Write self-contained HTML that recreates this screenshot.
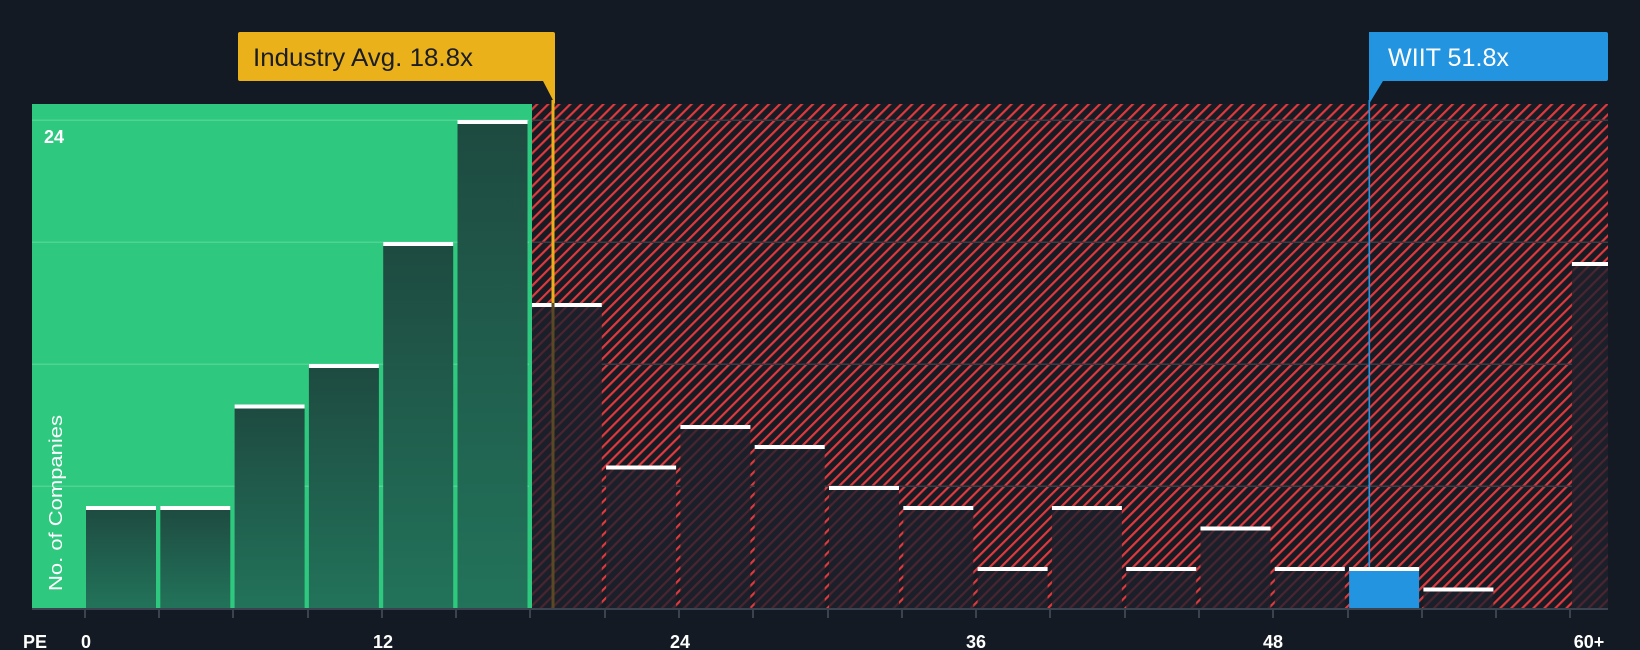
<!DOCTYPE html>
<html><head><meta charset="utf-8"><style>
html,body{margin:0;padding:0;background:#131a24;}
svg{display:block}
text{font-family:"Liberation Sans",sans-serif;}
</style></head><body>
<svg width="1640" height="650" viewBox="0 0 1640 650" xmlns="http://www.w3.org/2000/svg">
<defs>
<pattern id="hatch" patternUnits="userSpaceOnUse" width="7.8" height="7.8" patternTransform="rotate(45)">
<rect width="7.8" height="7.8" fill="#171b23"/>
<rect x="0" y="0" width="2.2" height="7.8" fill="#e0393e"/>
</pattern>
<pattern id="hatch2" patternUnits="userSpaceOnUse" width="7.8" height="7.8" patternTransform="rotate(45)">
<rect width="7.8" height="7.8" fill="#1b1f29"/>
<rect x="0" y="0" width="2.2" height="7.8" fill="#4a2530"/>
</pattern>
<linearGradient id="gbar" x1="0" y1="0" x2="0" y2="1">
<stop offset="0" stop-color="#1e4a40"/><stop offset="1" stop-color="#22735a"/>
</linearGradient>
</defs>
<rect width="1640" height="650" fill="#131a24"/>
<rect x="32" y="104" width="499" height="504" fill="#2ec97f"/>
<rect x="531" y="104" width="1077" height="504" fill="url(#hatch)"/>
<g stroke-width="1.5">
<line x1="32" x2="531" y1="120.3" y2="120.3" stroke="#4fd494"/>
<line x1="32" x2="531" y1="242.3" y2="242.3" stroke="#4fd494"/>
<line x1="32" x2="531" y1="364.3" y2="364.3" stroke="#4fd494"/>
<line x1="32" x2="531" y1="486.3" y2="486.3" stroke="#4fd494"/>
<line x1="531" x2="1608" y1="120.3" y2="120.3" stroke="#3a3d45"/>
<line x1="531" x2="1608" y1="242.3" y2="242.3" stroke="#3a3d45"/>
<line x1="531" x2="1608" y1="364.3" y2="364.3" stroke="#3a3d45"/>
<line x1="531" x2="1608" y1="486.3" y2="486.3" stroke="#3a3d45"/>
</g>
<g fill="url(#gbar)">
<rect x="86" y="506.4" width="70" height="101.6"/>
<rect x="160.3" y="506.4" width="70" height="101.6"/>
<rect x="234.6" y="404.7" width="70" height="203.3"/>
<rect x="308.9" y="364" width="70" height="244"/>
<rect x="383.2" y="242" width="70" height="366"/>
<rect x="457.5" y="120" width="70" height="488"/>
</g>
<g fill="url(#hatch2)">
<rect x="531.8" y="303" width="70" height="305"/>
<rect x="606.1" y="465.7" width="70" height="142.3"/>
<rect x="680.4" y="425" width="70" height="183"/>
<rect x="754.7" y="445.4" width="70" height="162.6"/>
<rect x="829" y="486" width="70" height="122"/>
<rect x="903.3" y="506.4" width="70" height="101.6"/>
<rect x="977.6" y="567.3" width="70" height="40.7"/>
<rect x="1051.9" y="506.4" width="70" height="101.6"/>
<rect x="1126.2" y="567.3" width="70" height="40.7"/>
<rect x="1200.5" y="526.7" width="70" height="81.3"/>
<rect x="1274.8" y="567.3" width="70" height="40.7"/>
<rect x="1423.4" y="587.7" width="70" height="20.3"/>
<rect x="1571.9" y="262.4" width="36.1" height="345.6"/>
</g>
<rect x="1349.1" y="567.3" width="70" height="40.7" fill="#2394e0"/>
<g fill="#ffffff">
<rect x="86" y="506" width="70" height="4"/>
<rect x="160.3" y="506" width="70" height="4"/>
<rect x="234.6" y="404.5" width="70" height="4"/>
<rect x="308.9" y="364" width="70" height="4"/>
<rect x="383.2" y="242" width="70" height="4"/>
<rect x="457.5" y="120" width="70" height="4"/>
<rect x="531.8" y="303" width="70" height="4"/>
<rect x="606.1" y="465.5" width="70" height="4"/>
<rect x="680.4" y="425" width="70" height="4"/>
<rect x="754.7" y="445" width="70" height="4"/>
<rect x="829" y="486" width="70" height="4"/>
<rect x="903.3" y="506" width="70" height="4"/>
<rect x="977.6" y="567" width="70" height="4"/>
<rect x="1051.9" y="506" width="70" height="4"/>
<rect x="1126.2" y="567" width="70" height="4"/>
<rect x="1200.5" y="526.5" width="70" height="4"/>
<rect x="1274.8" y="567" width="70" height="4"/>
<rect x="1349.1" y="567" width="70" height="4"/>
<rect x="1423.4" y="587.5" width="70" height="4"/>
<rect x="1571.9" y="262" width="36.1" height="4"/>
</g>
<rect x="529" y="104" width="3" height="504" fill="#2ec97f"/>
<rect x="551.5" y="100" width="3" height="204" fill="#eab11a"/>
<rect x="551.5" y="303" width="3" height="305" fill="#5a4a24"/>
<rect x="1368.5" y="100" width="1.6" height="467" fill="#2394e0"/>
<line x1="32" x2="1608" y1="609" y2="609" stroke="#3c4350" stroke-width="2"/>
<g stroke="#3c4350" stroke-width="2">
<line x1="85" x2="85" y1="609" y2="618"/><line x1="159" x2="159" y1="609" y2="618"/>
<line x1="233" x2="233" y1="609" y2="618"/><line x1="308" x2="308" y1="609" y2="618"/>
<line x1="382" x2="382" y1="609" y2="618"/><line x1="456" x2="456" y1="609" y2="618"/>
<line x1="530" x2="530" y1="609" y2="618"/><line x1="605" x2="605" y1="609" y2="618"/>
<line x1="679" x2="679" y1="609" y2="618"/><line x1="753" x2="753" y1="609" y2="618"/>
<line x1="828" x2="828" y1="609" y2="618"/><line x1="902" x2="902" y1="609" y2="618"/>
<line x1="976" x2="976" y1="609" y2="618"/><line x1="1050" x2="1050" y1="609" y2="618"/>
<line x1="1125" x2="1125" y1="609" y2="618"/><line x1="1199" x2="1199" y1="609" y2="618"/>
<line x1="1273" x2="1273" y1="609" y2="618"/><line x1="1348" x2="1348" y1="609" y2="618"/>
<line x1="1422" x2="1422" y1="609" y2="618"/><line x1="1496" x2="1496" y1="609" y2="618"/>
<line x1="1570" x2="1570" y1="609" y2="618"/>
</g>
<g fill="#ffffff" font-size="18" font-weight="bold">
<text x="23" y="648">PE</text>
<text x="86" y="648" text-anchor="middle">0</text>
<text x="383" y="648" text-anchor="middle">12</text>
<text x="680" y="648" text-anchor="middle">24</text>
<text x="976" y="648" text-anchor="middle">36</text>
<text x="1273" y="648" text-anchor="middle">48</text>
<text x="1589" y="648" text-anchor="middle">60+</text>
<text x="44" y="143">24</text>
</g>
<text transform="translate(62,591) rotate(-90)" fill="#ffffff" font-size="18" textLength="176" lengthAdjust="spacingAndGlyphs">No. of Companies</text>
<path d="M240 32 H553 Q555 32 555 34 V104 L543 81 H240 Q238 81 238 79 V34 Q238 32 240 32 Z" fill="#eab11a"/>
<text x="253" y="66" font-size="25" fill="#1a1d24" textLength="220" lengthAdjust="spacingAndGlyphs">Industry Avg. 18.8x</text>
<path d="M1369 32 H1606 Q1608 32 1608 34 V79 Q1608 81 1606 81 H1383 L1369 104 Z" fill="#2394e0"/>
<text x="1388" y="66" font-size="25" fill="#ffffff" textLength="121" lengthAdjust="spacingAndGlyphs">WIIT 51.8x</text>
</svg>
</body></html>
